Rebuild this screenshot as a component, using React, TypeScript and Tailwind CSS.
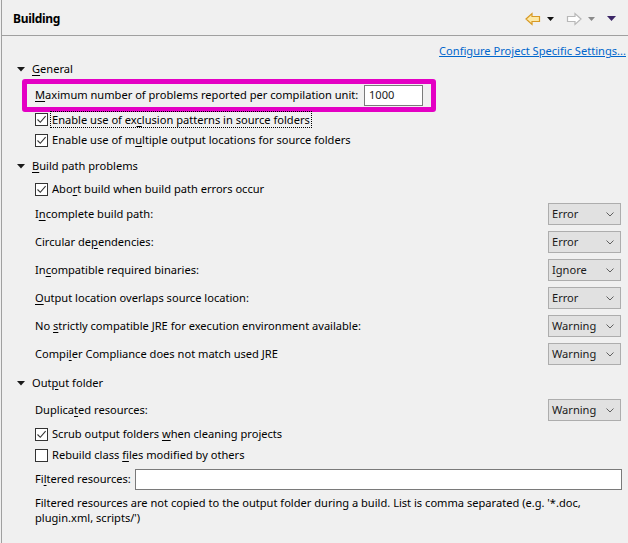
import React from "react";

const font = "font-['Segoe_UI','Noto_Sans',sans-serif]";

// one letter underlined, like a Windows mnemonic
const Mn = ({ text, at }: { text: string; at: number }) => (
  <>
    {text.slice(0, at)}
    <span className="underline underline-offset-2">{text[at]}</span>
    {text.slice(at + 1)}
  </>
);

const Twisty = () => (
  <svg width="8" height="5" viewBox="0 0 8 5" className="mr-[7px]">
    <polygon points="0,0 8,0 4,4.5" fill="#1a1a1a" />
  </svg>
);

const Check = ({ on }: { on: boolean }) => (
  <span className="w-[13px] h-[13px] border border-[#333] bg-white flex items-center justify-center shrink-0">
    {on && (
      <svg width="11" height="11" viewBox="0 0 11 11">
        <path d="M1.5 5.5 L4.3 8.3 L9.6 2.2" stroke="#333" strokeWidth="1.1" fill="none" />
      </svg>
    )}
  </span>
);

const Combo = ({ value }: { value: string }) => (
  <div className="w-[73px] h-[22px] bg-[#e1e1e1] border border-[#adadad] flex items-center justify-between pl-[3px] pr-[6px] text-[#1a1a1a]">
    <span>{value}</span>
    <svg width="8" height="5" viewBox="0 0 8 5">
      <path d="M0.5 0.5 L4 4 L7.5 0.5" stroke="#606060" strokeWidth="1" fill="none" />
    </svg>
  </div>
);

const Section = ({ children }: { children: React.ReactNode }) => (
  <div className="flex items-center pl-[15px] h-full">
    <Twisty />
    <span>{children}</span>
  </div>
);

const comboRows: [string, number, string][] = [
  ["Incomplete build path:", 1, "Error"],
  ["Circular dependencies:", 11, "Error"],
  ["Incompatible required binaries:", 2, "Ignore"],
  ["Output location overlaps source location:", 0, "Error"],
  ["No strictly compatible JRE for execution environment available:", 3, "Warning"],
  ["Compiler Compliance does not match used JRE", 5, "Warning"],
];

export default function App() {
  return (
    <div className={`${font} text-[11.1px] text-black w-[628px] h-[543px] bg-[#f0f0f0] pl-px overflow-hidden whitespace-nowrap`}>
      <div className="h-full border-l border-[#a0a0a0]">
        {/* title bar */}
        <div className="h-[36px] border-b border-[#a0a0a0] flex items-center justify-between pl-[11px] pr-[12px]">
          <span className="font-bold text-[12px] tracking-tight pt-[2px]">Building</span>
          <div className="flex items-center gap-[6px] pt-[2px]">
            <svg width="16" height="14" viewBox="0 0 16 14">
              <polygon points="1,7 7,1.5 7,4.5 14.5,4.5 14.5,9.5 7,9.5 7,12.5" fill="#fde9a6" stroke="#d89a25" strokeWidth="1.2" />
            </svg>
            <svg width="7" height="4" viewBox="0 0 7 4" className="mr-[6px]">
              <polygon points="0,0 7,0 3.5,4" fill="#111" />
            </svg>
            <svg width="16" height="14" viewBox="0 0 16 14">
              <polygon points="15,7 9,1.5 9,4.5 1.5,4.5 1.5,9.5 9,9.5 9,12.5" fill="#fff" stroke="#b8b8b8" strokeWidth="1.2" />
            </svg>
            <svg width="7" height="4" viewBox="0 0 7 4" className="mr-[6px]">
              <polygon points="0,0 7,0 3.5,4" fill="#8a8a8a" />
            </svg>
            <svg width="9" height="5" viewBox="0 0 9 5">
              <polygon points="0,0 9,0 4.5,5" fill="#3b2566" />
            </svg>
          </div>
        </div>

        <div className="h-[24px] flex items-end justify-end pr-[2px]">
          <span className="text-[#0066cc] underline">Configure Project Specific Settings...</span>
        </div>

        <div className="h-[19px]">
          <Section>
            <Mn text="General" at={0} />
          </Section>
        </div>

        <div className="ml-[20px] w-[414px] h-[33px] border-[5px] border-[#e400c4] rounded-[3px] flex items-center justify-between pl-[8px] pr-[8px]">
          <span>
            <Mn text="Maximum number of problems reported per compilation unit:" at={0} />
          </span>
          <div className="w-[59px] h-[21px] bg-white border border-[#7a7a7a] flex items-center pl-[4px] text-[#1a1a1a]">1000</div>
        </div>

        <div className="h-[14px] flex items-center pl-[33px] gap-[2px]">
          <Check on />
          <span className="border border-dotted border-black px-px leading-[15px]">
            <Mn text="Enable use of exclusion patterns in source folders" at={16} />
          </span>
        </div>
        <div className="h-[28px] flex items-center pl-[33px] gap-[4px]">
          <Check on />
          <span>
            <Mn text="Enable use of multiple output locations for source folders" at={15} />
          </span>
        </div>

        <div className="h-[24px]">
          <Section>
            <Mn text="Build path problems" at={0} />
          </Section>
        </div>
        <div className="h-[22px] flex items-center pl-[33px] gap-[4px]">
          <Check on />
          <span>
            <Mn text="Abort build when build path errors occur" at={3} />
          </span>
        </div>

        {comboRows.map(([label, at, value]) => (
          <div key={label} className="h-[28px] flex items-center justify-between pl-[33px] pr-[7px]">
            <span>
              <Mn text={label} at={at} />
            </span>
            <Combo value={value} />
          </div>
        ))}

        <div className="h-[30px]">
          <Section>
            <Mn text="Output folder" at={3} />
          </Section>
        </div>
        <div className="h-[24px] flex items-center justify-between pl-[33px] pr-[7px]">
          <span>
            <Mn text="Duplicated resources:" at={7} />
          </span>
          <Combo value="Warning" />
        </div>
        <div className="h-[24px] flex items-center pl-[33px] gap-[4px]">
          <Check on />
          <span>
            <Mn text="Scrub output folders when cleaning projects" at={21} />
          </span>
        </div>
        <div className="h-[18px] flex items-center pl-[33px] gap-[4px]">
          <Check on={false} />
          <span>
            <Mn text="Rebuild class files modified by others" at={14} />
          </span>
        </div>
        <div className="h-[30px] flex items-center pl-[33px] pr-[6px] gap-[4px]">
          <span className="shrink-0">
            <Mn text="Filtered resources:" at={2} />
          </span>
          <div className="flex-1 h-[21px] bg-white border border-[#7a7a7a]" />
        </div>
        <p className="pl-[33px] leading-[15px] pt-px">
          Filtered resources are not copied to the output folder during a build. List is comma separated (e.g. '*.doc,
          <br />
          plugin.xml, scripts/')
        </p>
      </div>
    </div>
  );
}
